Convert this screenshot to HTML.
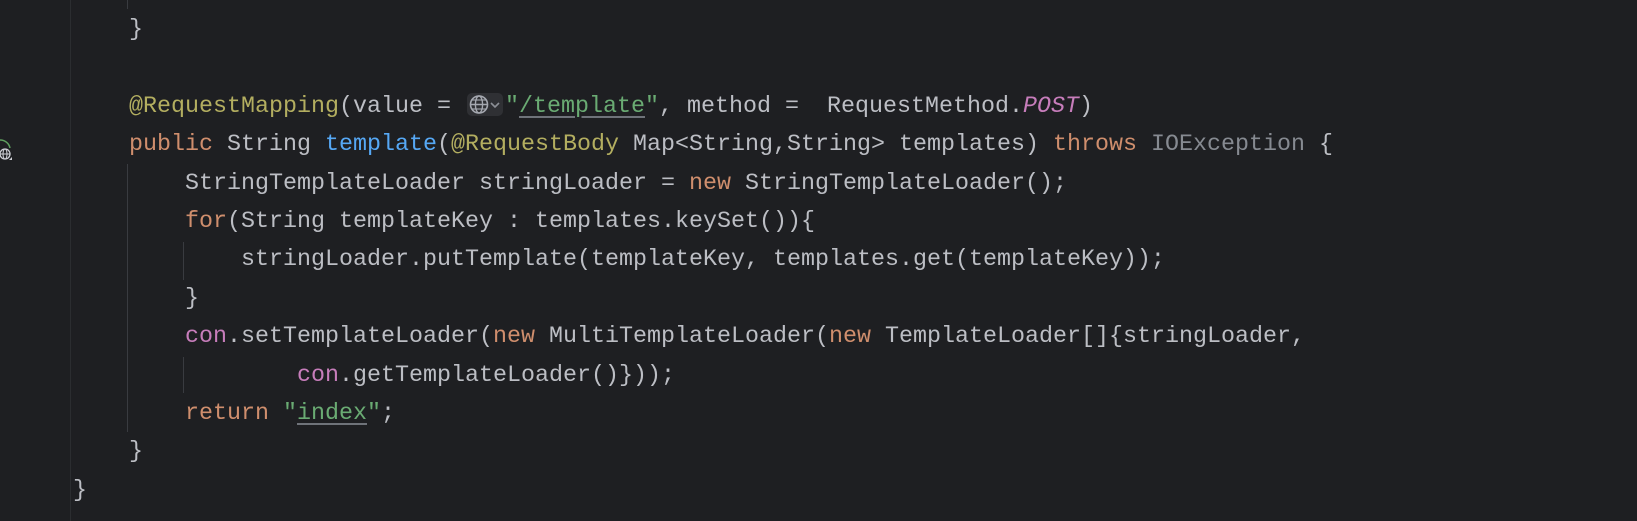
<!DOCTYPE html>
<html><head><meta charset="utf-8"><style>
html,body{margin:0;padding:0;background:#1e1f22;width:1637px;height:521px;overflow:hidden}
.code{position:absolute;left:73px;top:-27.4px;font-family:"Liberation Mono",monospace;font-size:23.33px;line-height:38.4px;color:#bcbec4;white-space:pre}
.k{color:#cf8e6d}.a{color:#b3ae60}.s{color:#6aab73}.m{color:#56a8f5}.f{color:#c77dbb}.g{color:#868a91}
.u{text-decoration:underline;text-decoration-color:#6f737a;text-underline-offset:4px}
.guide{position:absolute;width:1px;background:#393b40}
.gutter{position:absolute;left:70px;top:0;width:1px;height:521px;background:#2b2d30}
.globe{display:inline-block;width:36px;height:23px;background:#2f3034;border-radius:5px;vertical-align:-4px;margin:0 2px 0 2px;position:relative}
</style></head><body>
<div class="gutter"></div>
<div class="guide" style="left:127px;top:0;height:9px"></div>
<div class="guide" style="left:127px;top:164px;height:268px"></div>
<div class="guide" style="left:183px;top:242px;height:38px"></div>
<div class="guide" style="left:183px;top:357px;height:36px"></div>
<svg style="position:absolute;left:0;top:138px" width="14" height="28" viewBox="0 0 14 28">
<path d="M0 2 A10 10 0 0 1 10 10" fill="none" stroke="#5fa05f" stroke-width="1.5"/>
<circle cx="5" cy="16" r="5" fill="none" stroke="#ced0d6" stroke-width="1.3"/>
<ellipse cx="5" cy="16" rx="2" ry="5" fill="none" stroke="#ced0d6" stroke-width="1"/>
<line x1="0" y1="16" x2="10" y2="16" stroke="#ced0d6" stroke-width="1"/>
<path d="M9 22 L12 22 L12 19 Z" fill="#ced0d6"/>
</svg>
<div class="code"><span style="visibility:hidden">x</span>
    }

    <span class="a">@RequestMapping</span>(value = <span class="globe"><svg style="position:absolute;left:1px;top:1px" width="34" height="21" viewBox="0 0 34 21"><circle cx="11" cy="10.5" r="8.5" fill="none" stroke="#a5a8b0" stroke-width="1.6"/><ellipse cx="11" cy="10.5" rx="3.6" ry="8.5" fill="none" stroke="#a5a8b0" stroke-width="1.4"/><line x1="2.5" y1="10.5" x2="19.5" y2="10.5" stroke="#a5a8b0" stroke-width="1.4"/><line x1="4" y1="6" x2="18" y2="6" stroke="#a5a8b0" stroke-width="1.1"/><line x1="4" y1="15" x2="18" y2="15" stroke="#a5a8b0" stroke-width="1.1"/><path d="M23 9 L27 13 L31 9" fill="none" stroke="#8c8f96" stroke-width="1.6"/></svg></span><span class="s">"<span class="u">/template</span>"</span>, method =  RequestMethod.<i class="f">POST</i>)
    <span class="k">public</span> String <span class="m">template</span>(<span class="a">@RequestBody</span> Map&lt;String,String&gt; templates) <span class="k">throws</span> <span class="g">IOException</span> {
        StringTemplateLoader stringLoader = <span class="k">new</span> StringTemplateLoader();
        <span class="k">for</span>(String templateKey : templates.keySet()){
            stringLoader.putTemplate(templateKey, templates.get(templateKey));
        }
        <span class="f">con</span>.setTemplateLoader(<span class="k">new</span> MultiTemplateLoader(<span class="k">new</span> TemplateLoader[]{stringLoader,
                <span class="f">con</span>.getTemplateLoader()}));
        <span class="k">return</span> <span class="s">"<span class="u">index</span>"</span>;
    }
}</div>
</body></html>
